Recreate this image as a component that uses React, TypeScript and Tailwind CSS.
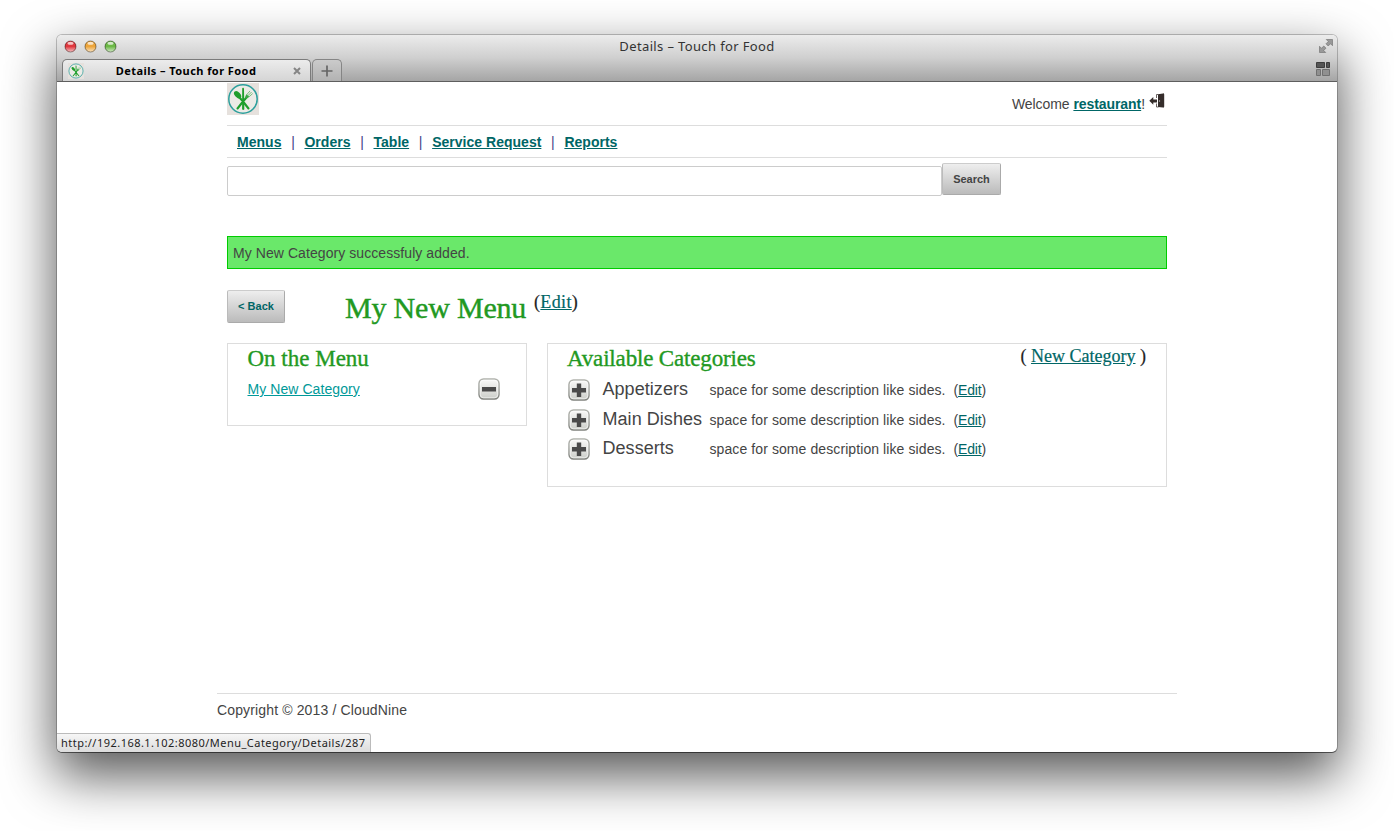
import React from "react";

function Logo({ size }: { size: number }) {
  return (
    <svg width={size} height={size} viewBox="0 0 32 32" className="block shrink-0">
      <rect width="32" height="32" fill="#e6e1dd" />
      <circle cx="16" cy="16" r="14.200" fill="#ecebe6" stroke="#2c9f9c" strokeWidth="1.500" />
      <path d="M15.200 5.500c0-1 1.800-1 1.800.5l.3 20c0 1.200-2.200 1.200-2.200 0z" fill="#1f9e2c" />
      <path d="M12.500 14.500 16 18.500l5.500 7M19.500 14.500 16 18.500l-5.500 7" fill="none" stroke="#1f9e2c" strokeWidth="2.100" strokeLinecap="round" strokeLinejoin="round" />
      <ellipse cx="10.600" cy="11.800" rx="2.700" ry="4.400" transform="rotate(-42 10.600 11.800)" fill="#1f9e2c" />
      <path d="M18.300 15.200c-.3-2 .4-3 1.400-4l2.600 2.600c-1 1-2 1.800-4 1.400z" fill="#3aa844" />
      <path d="m19.800 11.600 3-3.400M21 12.600l3.300-3.300M22 13.800l3.400-3" stroke="#6ab970" strokeWidth=".9" strokeLinecap="round" />
    </svg>
  );
}

function Light({ color }: { color: string }) {
  const id = "light" + color.slice(1);
  return (
    <svg width="13" height="13" viewBox="0 0 13 13" className="block">
      <defs>
        <linearGradient id={id} x1="0" y1="0" x2="0" y2="1">
          <stop offset="0" stopColor={color} />
          <stop offset=".5" stopColor={color} />
          <stop offset="1" stopColor="#fff" />
        </linearGradient>
      </defs>
      <circle cx="6.500" cy="6.500" r="5.500" fill={color} />
      <circle cx="6.500" cy="6.500" r="5.500" fill={`url(#${id})`} fillOpacity=".7" stroke="#000" strokeOpacity=".4" />
      <ellipse cx="6.500" cy="3.200" rx="3" ry="1.500" fill="#fff" opacity=".7" />
    </svg>
  );
}

function RoundButton({ plus }: { plus?: boolean }) {
  return (
    <svg width="22" height="22" viewBox="0 0 22 22" className="block shrink-0">
      <defs>
        <linearGradient id="face" x1="0" y1="0" x2="0" y2="1">
          <stop offset="0" stopColor="#fafaf9" />
          <stop offset="1" stopColor="#cbcdc8" />
        </linearGradient>
        <linearGradient id="rim" x1="0" y1="0" x2="0" y2="1">
          <stop offset="0" stopColor="#b0b2ac" />
          <stop offset="1" stopColor="#7f817c" />
        </linearGradient>
      </defs>
      <rect x="1" y="1" width="20" height="20" rx="4.500" fill="url(#face)" stroke="url(#rim)" strokeWidth="1.400" />
      <rect x="2.200" y="2.200" width="17.600" height="17.600" rx="3.500" fill="none" stroke="#fff" strokeOpacity=".6" />
      <path d="M4 9h14v4.500H4z" fill="#4a4a4a" />
      {plus && <path d="M8.800 4.500h4.400V18H8.800z" fill="#4a4a4a" />}
    </svg>
  );
}

const categories = ["Appetizers", "Main Dishes", "Desserts"];
const links = ["Menus", "Orders", "Table", "Service Request", "Reports"];

function TitleBar() {
  return (
    <header className="flex h-[47px] flex-col border-b border-[#5e5e5e] bg-gradient-to-b from-[#ececec] via-[#cfcfcf] to-[#a5a5a5]">
      <div className="grid h-[24px] grid-cols-[1fr_auto_1fr] items-center pb-[2px]">
        <div className="flex gap-[7px] pl-[7px]">
          <Light color="#e0383e" />
          <Light color="#eda53a" />
          <Light color="#6cb946" />
        </div>
        <div className="font-['Noto_Sans'] text-[13px] tracking-[0.37px] text-[#333]">Details – Touch for Food</div>
        <div className="flex justify-end pr-[3px]">
          <svg width="16" height="16" viewBox="0 0 16 16" fill="#999" stroke="#777" strokeWidth=".7">
            <path d="M14.500 1.500v6.200l-2-2-2.300 2.300-2.200-2.200 2.300-2.300-2-2zM1.500 14.500V8.300l2 2L5.800 8 8 10.200l-2.300 2.300 2 2z" />
          </svg>
        </div>
      </div>
      <div className="flex h-[22px] items-stretch pl-[5px]">
        <div className="flex w-[249px] items-center rounded-t-[5px] border border-b-0 border-[#7b7b7b] bg-gradient-to-b from-[#ececec] to-[#d5d5d5] pl-[5px] pr-[9px]">
          <Logo size={16} />
          <div className="flex-1 whitespace-nowrap pr-[5px] text-center font-['Noto_Sans'] text-[11px] font-bold tracking-[0.43px] text-black">Details – Touch for Food</div>
          <svg width="8" height="8" viewBox="0 0 8 8" stroke="#858585" strokeWidth="2">
            <path d="m1 1 6 6M7 1 1 7" />
          </svg>
        </div>
        <div className="ml-px flex w-[30px] items-center justify-center rounded-t-[5px] border border-b-0 border-[#858585] bg-gradient-to-b from-[#cbcbcb] to-[#b2b2b2]">
          <svg width="12" height="12" viewBox="0 0 12 12" stroke="#666" strokeWidth="1.700">
            <path d="M6 .5v11M.5 6h11" />
          </svg>
        </div>
        <div className="ml-auto pr-[7px] pt-[3px]">
          <svg width="14" height="14" viewBox="0 0 14 14">
            <g fill="#555" stroke="#3d3d3d">
              <path d="M.5.5h8v5h-8zM10.500.5h3v5h-3z" />
            </g>
            <g fill="#909090" stroke="#707070">
              <path d="M.5 7.500h4v6h-4zM6.500 7.500h7v6h-7z" />
            </g>
          </svg>
        </div>
      </div>
    </header>
  );
}

export default function App() {
  return (
    <div className="h-[831px] w-[1394px] overflow-hidden bg-white pl-[57px] pt-[35px] font-['Liberation_Sans',sans-serif] text-[14px] leading-[18px] text-[#444]">
      <div className="flex h-[717px] w-[1280px] flex-col overflow-hidden rounded-[5px] bg-white shadow-[0_0_0_1px_rgba(0,0,0,0.22),0_1px_0_0_rgba(0,0,0,0.4),0_22px_52px_2px_rgba(0,0,0,0.66)]">
        <TitleBar />
        <main className="mx-auto flex w-[960px] flex-1 flex-col">
          <div className="flex h-[612px] flex-col border-b border-[#ddd] px-[10px]">
            <div className="flex h-[44px] items-start justify-between border-b border-[#ddd] pt-px">
              <Logo size={32} />
              <div className="flex pr-[2px] pt-[12px]">
                <span className="tracking-[-0.07px]">
                  Welcome <a className="font-bold text-[#066] underline">restaurant</a>!
                </span>
                <svg width="16" height="16" viewBox="0 0 16 16" className="-mt-[2px] ml-[4px]">
                  <path d="M9 1.200 14 .4q1.200-.2 1.200 1v12.200q0 1.200-1.200 1L9 14z" fill="#352d2b" />
                  <path d="M7.500 5V1.500h2M7.500 10.500V14h2" fill="none" stroke="#5a5250" strokeWidth=".9" />
                  <path d="M.3 7.800 4.300 4v2.400H8v3H4.300v2.400z" fill="#352d2b" />
                  <circle cx="10.500" cy="8" r=".7" fill="#bbb" />
                </svg>
              </div>
            </div>
            <nav className="flex h-[32px] items-center border-b border-[#ddd] pl-[10px]">
              {links.map((l, i) => (
                <React.Fragment key={l}>
                  {i > 0 && <span className="w-[23px] text-center text-[#448]">|</span>}
                  <a className="font-bold tracking-[0.02px] text-[#066] underline">{l}</a>
                </React.Fragment>
              ))}
            </nav>
            <div className="mt-[5px] flex h-[33px] items-start">
              <div className="mt-[3px] h-[30px] w-[715px] rounded-[2px] border border-[#ccc]" />
              <button className="h-[32px] w-[59px] rounded-[2px] border border-[#aaa] border-l-[#bbb] border-t-[#ccc] bg-gradient-to-b from-[#eee] to-[#bbb] text-[11px] font-bold text-[#444]">Search</button>
            </div>
            <div className="mt-[40px] flex h-[33px] items-center border border-[#0c0] bg-[#6ae86a] pl-[5px]">
              <span className="tracking-[0.07px]">My New Category successfuly added.</span>
            </div>
            <div className="mt-[21px] flex h-[33px]">
              <button className="h-[33px] w-[58px] rounded-[2px] border border-[#aaa] border-l-[#bbb] border-t-[#ccc] bg-gradient-to-b from-[#eee] to-[#bbb] pb-[2px] text-[11px] font-bold text-[#066]">&lt; Back</button>
              <h1 className="ml-[60px] w-[189px] whitespace-nowrap font-['Liberation_Serif',serif] text-[30px] leading-[35px] tracking-[-0.2px] text-[#292] [-webkit-text-stroke:0.4px_#229922]">My New Menu</h1>
              <div className="whitespace-nowrap font-['Liberation_Serif',serif] text-[18px] leading-[24px] tracking-[0.35px] text-[#222] [-webkit-text-stroke:0.2px]">
                (<a className="text-[#066] underline">Edit</a>)
              </div>
            </div>
            <div className="mt-[20px] flex items-start gap-[20px]">
              <section className="h-[83px] w-[300px] border border-[#ddd] pl-[19.500px] pr-[26px]">
                <h2 className="h-[34px] font-['Liberation_Serif',serif] text-[23px] leading-[29px] text-[#292] [-webkit-text-stroke:0.35px_#229922]">On the Menu</h2>
                <div className="flex items-start justify-between">
                  <a className="pt-[2px] tracking-[0.07px] text-[#099] underline">My New Category</a>
                  <RoundButton />
                </div>
              </section>
              <section className="h-[144px] w-[620px] border border-[#ddd] px-[20px]">
                <div className="flex h-[35px] justify-between font-['Liberation_Serif',serif]">
                  <h2 className="-ml-px text-[23px] leading-[29px] tracking-[-0.16px] text-[#292] [-webkit-text-stroke:0.35px_#229922]">Available Categories</h2>
                  <div className="text-[18px] leading-[24px] text-[#222] [-webkit-text-stroke:0.2px]">
                    ( <a className="text-[#066] underline">New Category</a> )
                  </div>
                </div>
                {categories.map((c) => (
                  <div key={c} className="flex h-[29.500px] items-start">
                    <RoundButton plus />
                    <span className="ml-[12.500px] w-[107px] whitespace-nowrap text-[18px] leading-[20px] tracking-[0.05px]">{c}</span>
                    <span className="whitespace-nowrap pt-[2px] tracking-[0.09px]">space for some description like sides.</span>
                    <span className="ml-[8px] pt-[2px] tracking-[-0.2px]">
                      (<a className="text-[#066] underline">Edit</a>)
                    </span>
                  </div>
                ))}
              </section>
            </div>
          </div>
          <footer className="pt-[7px] tracking-[0.14px]">Copyright © 2013 / CloudNine</footer>
        </main>
        <div className="flex h-[19px] w-[314px] items-center rounded-tr-[3px] border-r border-t border-[#bbb] bg-gradient-to-b from-[#f6f6f6] to-[#dcdcdc] pl-[4px] font-['Noto_Sans'] text-[11px] text-[#222]">
          <span className="whitespace-nowrap tracking-[0.47px]">http://192.168.1.102:8080/Menu_Category/Details/287</span>
        </div>
      </div>
    </div>
  );
}
